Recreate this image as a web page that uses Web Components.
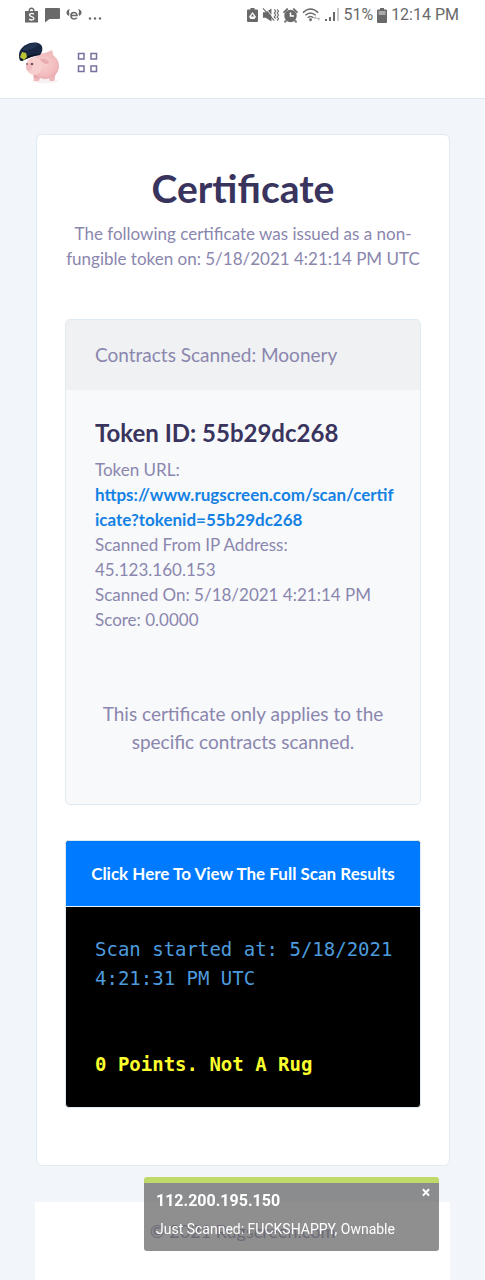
<!DOCTYPE html>
<html lang="en">
<head>
<meta charset="utf-8">
<meta name="viewport" content="width=device-width, initial-scale=1">
<title>Certificate</title>
<style>
html, body { margin: 0; }
body {
  --ink: #39345d;
  --muted: #8a86ae;
  --blue: #1481e3;
  --line: #dfebf1;
  min-height: 100vh;
  display: flex;
  flex-direction: column;
  background: #f2f6fb;
  color: var(--muted);
  font-family: Lato, "Open Sans", sans-serif;
  font-size: 17px;
  line-height: 25px;
}
</style>
</head>
<body>
<phone-status></phone-status>
<site-header></site-header>
<certificate-page></certificate-page>
<site-footer>© 2021 Rugscreen.com</site-footer>
<scan-toast><span slot="title">112.200.195.150</span>Just Scanned: FUCKSHAPPY, Ownable</scan-toast>

<script>
function define(name, html) {
  const template = document.createElement('template');
  template.innerHTML = html;
  customElements.define(name, class extends HTMLElement {
    constructor() {
      super();
      this.attachShadow({ mode: 'open' }).append(template.content.cloneNode(true));
    }
  });
}

define('phone-status', `
<style>
:host { display: flex; justify-content: space-between; align-items: center; height: 30px; padding: 0 26px 0 24px;
  background: #fff; color: #696969; font: 16px/30px Roboto, sans-serif; white-space: nowrap; }
div { display: flex; align-items: center; }
.left { gap: 6px; }
.right { gap: 4px; }
svg { display: block; fill: currentColor; }
</style>
<div class="left">
  <svg width="15" height="16" viewBox="0 0 15 16"><path fill-rule="evenodd" d="M1 4h3.500a3 3.500 0 0 1 6 0H14v11.500H1zM5.800 4h3.400a1.700 2 0 0 0-3.400 0z"/><path d="M9.800 7.300C8.600 6 5.500 6.200 5.500 8c0 2 4.400 1.200 4.400 3.400 0 2-3.300 2-4.700.6" fill="none" stroke="#fff" stroke-width="1.300"/></svg>
  <svg width="15" height="15" viewBox="0 0 15 15"><path d="M1 0h13a1 1 0 0 1 1 1v9a1 1 0 0 1-1 1H4.500L0 14.500V1a1 1 0 0 1 1-1z"/></svg>
  <svg width="16" height="16" viewBox="0 0 16 16"><path d="M4.800 8.500h6.300c0-4-6.200-4-6.200.2 0 3.600 4.200 4 6 2" fill="none" stroke="currentColor" stroke-width="1.500"/><path d="M3.800 2C-.5 3-.5 7.500 2.800 9L3.500 6.500C2.500 5.500 3 3.500 3.800 2zM12.200 2c4.300 1 4.300 5.500 1 7L12.500 6.500c1-1 .5-3-.3-4.500z"/></svg>
  <svg width="14" height="16" viewBox="0 0 14 16"><circle cx="2" cy="11.500" r="1.200"/><circle cx="7" cy="11.500" r="1.200"/><circle cx="12" cy="11.500" r="1.200"/></svg>
</div>
<div class="right">
  <svg width="11" height="14" viewBox="0 0 11 14"><path fill-rule="evenodd" d="M3.500 0h4v1.500H10q1 0 1 1V13q0 1-1 1H1q-1 0-1-1V2.500q0-1 1-1h2.500zM5.500 4L2 8.800 3.500 11h4L9 8.800z"/><path d="M5.500 6l1.600 2.400H3.900z"/></svg>
  <svg width="17" height="16" viewBox="0 0 18 16"><path d="M1 5h3l6-4v14l-6-4H1z"/><path d="M3 0l11 13" stroke="#fff" stroke-width="1"/><path d="M1 1l12 13M13 2l1.500 2L13 6l1.500 2L13 10l1.500 2M16 2l1.500 2L16 6l1.500 2L16 10l1.500 2L16 14" fill="none" stroke="currentColor" stroke-width="1.200"/></svg>
  <svg width="15" height="15" viewBox="0 0 15 15"><circle cx="7.500" cy="8" r="6.200"/><path d="M0 4l4-4 1.500 1L1 5.500zM15 4l-4-4-1.500 1L14 5.500zM2 12l2 1-2 2-1-1zM13 12l-2 1 2 2 1-1z"/><path d="M7.500 4.500V8H11" fill="none" stroke="#fff" stroke-width="1.500"/></svg>
  <svg width="19" height="16" viewBox="0 0 20 16"><path d="M1 5.500q8-7.500 16 0M3.500 8.300q5.500-5 11 0M6 11q3-2.800 6 0" fill="none" stroke="currentColor" stroke-width="1.500"/><circle cx="9" cy="13" r="1.500"/><path d="M14 9l2 3h-4zM17.500 14l-2-3h4z" fill="#bbb"/></svg>
  <svg width="14" height="16" viewBox="0 0 14 16"><path d="M0 12h2v2H0zM4 10h2v4H4zM8 5h2v9H8z"/><path d="M12 1h2v13h-2z" fill="#ccc"/></svg>
  <span>51%</span>
  <svg width="10" height="15" viewBox="0 0 10 15"><path d="M3 0h4v1.500h2q1 0 1 1V14q0 1-1 1H1q-1 0-1-1V2.500q0-1 1-1h2z"/><path d="M1.500 3h7v4h-7z" fill="#aaa"/></svg>
  <span>12:14 PM</span>
</div>`);

define('site-header', `
<style>
:host { display: flex; align-items: center; gap: 17px; height: 68px; padding: 0 18px;
  background: #fff; border-bottom: 1px solid #e0e7f0; }
a, svg { display: block; }
button { display: block; padding: 0; border: 0; background: none; color: #77719d; }
</style>
<a href="#" aria-label="Rugscreen home">
<svg width="42" height="44" viewBox="0 0 42 44">
  <defs><radialGradient id="p" cx=".45" cy=".4" r=".65"><stop offset="0" stop-color="#f8cfce"/><stop offset=".7" stop-color="#f2bcbe"/><stop offset="1" stop-color="#e8a8ae"/></radialGradient></defs>
  <ellipse cx="27" cy="39" rx="13" ry="2" fill="#f8eff1"/>
  <path d="M15 30l1 9h5l1-4h9l1 4h4l2-9z" fill="#e3a5ac"/>
  <path d="M16 36v3h5l-1-3zM31 35l2 4h3l1-5z" fill="#edb9bd"/>
  <ellipse cx="27" cy="24" rx="14" ry="13" fill="url(#p)"/>
  <path d="M25 12l9-4 3 11z" fill="#f0bdbf"/>
  <ellipse cx="16" cy="24" rx="8" ry="9" fill="#f7cfcf"/>
  <path d="M22 17q8-1 9 4-5 3-9-4z" fill="#e8adb2"/>
  <ellipse cx="11" cy="25" rx="3" ry="4" fill="#efbdc1"/>
  <circle cx="14" cy="22" r="1.300" fill="#76525e"/><circle cx="9" cy="22" r="1" fill="#8d6672"/>
  <path d="M1 13C1 4 13-1 20 1c6 2 5 8 2 12L13 15 3 19C1 18 1 15 1 13z" fill="#192842"/>
  <path d="M4 8C10 2 16 0 20 2c-2 4-9 7-16 6z" fill="#243553"/>
  <path d="M2 18q9-6 20-6-8 2-18 7z" fill="#08101e"/>
  <path d="M4 10l4 1 1 4-3 3-4-3z" fill="#b9c534"/>
</svg></a>
<button type="button" aria-label="Menu">
<svg width="22" height="24" viewBox="0 0 22 24" fill="none" stroke="currentColor" stroke-width="1.500"><path d="M1.500 1.500h5.500v5.500H1.500zM14 1.500h5.500v5.500H14zM1.500 14h5.500v5.500H1.500zM14 14h5.500v5.500H14z"/></svg>
</button>`);

define('certificate-page', `
<style>
:host { display: block; margin: 35px 35px 36px 36px; padding: 29px 28px 57px; background: #fff;
  border: 1px solid var(--line); border-radius: 6px; }
h1 { margin: 0; color: var(--ink); font-size: 39px; line-height: 48px; text-align: center; }
p { margin: 9px 0 48px; text-align: center; white-space: nowrap; }
</style>
<h1>Certificate</h1>
<p>The following certificate was issued as a non-<br>fungible token on: 5/18/2021 4:21:14 PM UTC</p>
<token-card><span slot="heading">Contracts Scanned: Moonery</span></token-card>
<scan-result></scan-result>`);

define('token-card', `
<style>
:host { display: block; background: #f8f9fb; border: 1px solid var(--line); border-radius: 5px; overflow: hidden; white-space: nowrap; }
header { padding: 21px 29px; background: #eff1f3; font-size: 19px; line-height: 28px; }
section { padding: 28px 29px 48px; }
h2 { margin: 0 0 9px; color: var(--ink); font-size: 24px; line-height: 30px; }
a { color: var(--blue); font-weight: 700; text-decoration: none; }
p { margin: 68px 0 0; font-size: 19px; line-height: 28px; text-align: center; }
</style>
<header><slot name="heading"></slot></header>
<section>
  <h2>Token ID: 55b29dc268</h2>
  <div>Token URL:</div>
  <a href="#">https://www.rugscreen.com/scan/certif<br>icate?tokenid=55b29dc268</a>
  <div>Scanned From IP Address:</div>
  <div>45.123.160.153</div>
  <div>Scanned On: 5/18/2021 4:21:14 PM</div>
  <div>Score: 0.0000</div>
  <p>This certificate only applies to the<br>specific contracts scanned.</p>
</section>`);

define('scan-result', `
<style>
:host { display: block; margin-top: 35px; background: #000; border: 1px solid var(--line); border-radius: 4px; overflow: hidden; white-space: nowrap; }
a { display: block; padding: 20px 0; background: #007bff; border-bottom: 1px solid #e6f2ff; color: #fff; font-weight: 700; text-align: center; text-decoration: none; }
div { padding: 28px 29px; color: #4d9bdd; font: 19px/29px "DejaVu Sans Mono", monospace; }
p { margin: 0; }
strong { display: block; margin-top: 57px; color: #fcff2d; }
</style>
<a href="#">Click Here To View The Full Scan Results</a>
<div><p>Scan started at: 5/18/2021<br>4:21:31 PM UTC</p><strong>0 Points. Not A Rug</strong></div>`);

define('site-footer', `
<style>
:host { display: block; flex: 1; margin: 0 35px; padding: 17px 0; background: #fff; font-size: 18px; text-align: center; }
</style>
<slot></slot>`);

define('scan-toast', `
<style>
:host { position: fixed; right: 46px; bottom: 29px; width: 295px; box-sizing: border-box; padding: 6px 12px 12px;
  border-top: 6px solid #bfd96b; border-radius: 3px; background: rgba(95, 95, 95, .7); background-clip: padding-box;
  color: #fff; font: 14px/20px Roboto, sans-serif; white-space: nowrap; }
h3 { margin: 0 0 6px; font-size: 16px; line-height: 24px; }
button { position: absolute; top: 0; right: 5px; padding: 0; width: 16px; border: 0; background: none; color: #fff; font: 700 16px/20px Roboto, sans-serif; }
</style>
<button type="button" aria-label="Close">×</button>
<h3><slot name="title"></slot></h3>
<div><slot></slot></div>`);
</script>
</body>
</html>
